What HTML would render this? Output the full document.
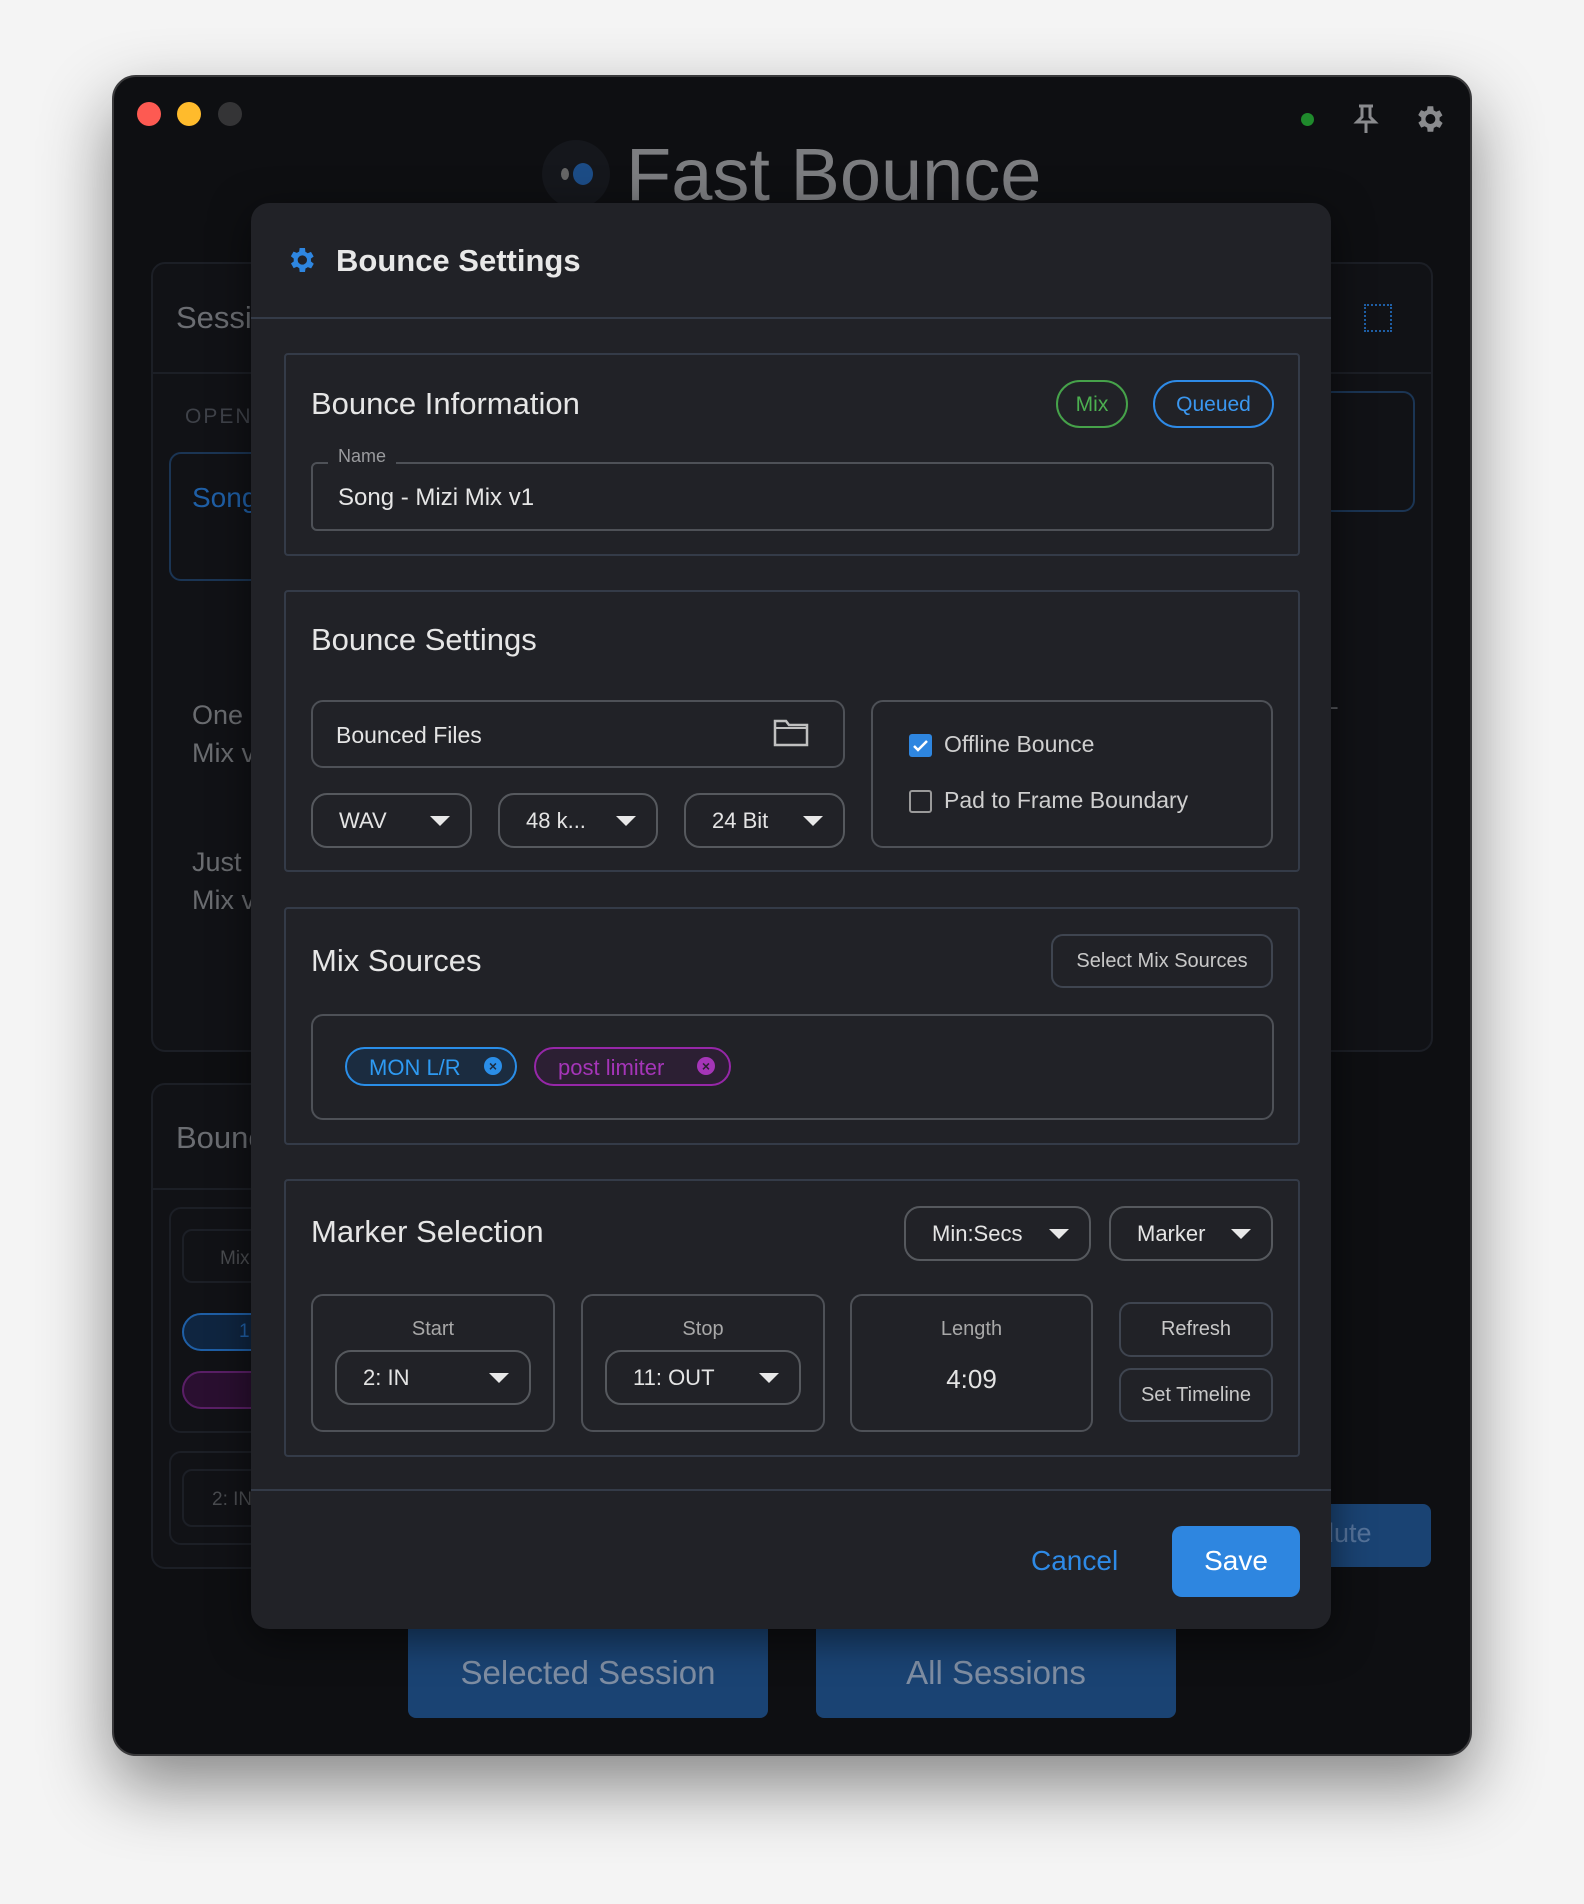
<!DOCTYPE html>
<html><head><meta charset="utf-8"><style>
*{box-sizing:border-box;margin:0;padding:0}
body{width:1584px;height:1904px;background:#f4f4f4;font-family:"Liberation Sans",sans-serif;position:relative;overflow:hidden}
.a{position:absolute}
.win{left:112px;top:75px;width:1360px;height:1681px;background:#0e0f12;border-radius:24px;border:2px solid #3a3a3c;box-shadow:0 30px 70px rgba(0,0,0,.45);overflow:hidden}
.dot{width:24px;height:24px;border-radius:50%;top:102px}
.bgcard{border:2px solid #1c1f26;border-radius:14px;background:#111216}
.t{color:#6b6d72;font-size:31px}
.dlg{left:251px;top:203px;width:1080px;height:1426px;background:#212227;border-radius:18px;box-shadow:0 10px 40px rgba(0,0,0,.5)}
.card{border:2px solid #343b48;border-radius:4px;left:284px;width:1016px}
.h{color:#e6e6e6;font-size:31px;left:311px}
.fld{border:2px solid #4e5157;border-radius:12px}
.dd{border:2px solid #56595e;border-radius:16px;color:#e4e4e4;font-size:22px;display:flex;align-items:center;justify-content:space-between;padding:0 20px 0 26px}
.tri{width:0;height:0;border-left:10px solid transparent;border-right:10px solid transparent;border-top:10px solid #e8e8e8}
.btn{border:2px solid #3f4550;border-radius:12px;color:#c8c8c8;font-size:20px;display:flex;align-items:center;justify-content:center}
.lab{color:#a8a8a8;font-size:20px;text-align:center;width:100%;top:22px;left:0}
</style></head><body>
<div class="a win"></div>
<div class="a dot" style="left:137px;background:#fd5a52"></div>
<div class="a dot" style="left:177px;background:#ffbb2c"></div>
<div class="a dot" style="left:218px;background:#343436"></div>
<div class="a" style="left:1301px;top:113px;width:13px;height:13px;border-radius:50%;background:#1f8a2c"></div>
<svg class="a" style="left:1352px;top:103px" width="28" height="32" viewBox="0 0 28 32"><path d="M7 3h14M10 3v11l-5 5h18l-5-5V3M14 19v11" stroke="#8a8b8e" stroke-width="3" fill="none"/></svg>
<svg class="a" style="left:1412px;top:102px" width="34" height="34" viewBox="0 0 24 24"><path fill="#8a8b8e" d="M19.4 13a7.5 7.5 0 0 0 0-2l2.1-1.6-2-3.5-2.5 1a7 7 0 0 0-1.7-1L15 3h-4l-.4 2.7a7 7 0 0 0-1.7 1l-2.5-1-2 3.5L6.6 11a7.5 7.5 0 0 0 0 2l-2.1 1.6 2 3.5 2.5-1a7 7 0 0 0 1.7 1L11 21h4l.4-2.7a7 7 0 0 0 1.7-1l2.5 1 2-3.5zM13 15.5a3.5 3.5 0 1 1 0-7 3.5 3.5 0 0 1 0 7z"/></svg>
<div class="a" style="left:542px;top:140px;width:68px;height:68px;border-radius:50%;background:#15171c"></div>
<div class="a" style="left:573px;top:163px;width:20px;height:22px;border-radius:50%;background:#1c4c86"></div>
<div class="a" style="left:561px;top:168px;width:8px;height:12px;border-radius:50%;background:#666"></div>
<div class="a" style="left:626px;top:132px;font-size:74px;color:#7c7d80">Fast Bounce</div>
<!-- background cards -->
<div class="a bgcard" style="left:151px;top:262px;width:1282px;height:790px"></div>
<div class="a" style="left:151px;top:372px;width:1282px;height:2px;background:#1c1f26"></div>
<div class="a t" style="left:176px;top:300px">Sessi</div>
<div class="a" style="left:185px;top:405px;color:#3f4249;font-size:21px;letter-spacing:2px">OPEN</div>
<div class="a" style="left:169px;top:452px;width:120px;height:129px;border:2px solid #1b3554;border-radius:12px"></div>
<div class="a" style="left:192px;top:482px;color:#1f5fa6;font-size:28px">Song</div>
<div class="a t" style="left:192px;top:696px;font-size:27px;line-height:38px;color:#6a6c70">One<br>Mix v</div>
<div class="a t" style="left:192px;top:843px;font-size:27px;line-height:38px;color:#6a6c70">Just<br>Mix v</div>
<div class="a" style="left:1320px;top:391px;width:95px;height:121px;border:2px solid #1b3554;border-radius:12px"></div>
<div class="a" style="left:1325px;top:688px;color:#55575c;font-size:24px">L</div>
<div class="a" style="left:1364px;top:304px;width:28px;height:28px;border:2px dotted #1f5fa6"></div>
<div class="a bgcard" style="left:151px;top:1083px;width:300px;height:486px"></div>
<div class="a t" style="left:176px;top:1120px">Bounc</div>
<div class="a" style="left:151px;top:1188px;width:300px;height:2px;background:#1c1f26"></div>
<div class="a" style="left:169px;top:1207px;width:120px;height:226px;border:2px solid #1c1f26;border-radius:12px"></div>
<div class="a" style="left:182px;top:1229px;width:100px;height:54px;border:2px solid #1c1f26;border-radius:10px;color:#4a4c50;font-size:19px;padding:17px 0 0 36px">Mix</div>
<div class="a" style="left:182px;top:1313px;width:100px;height:38px;border:2px solid #1f5fa6;border-radius:19px;background:#0f2540;color:#1f5fa6;font-size:19px;padding:6px 0 0 55px">1</div>
<div class="a" style="left:182px;top:1371px;width:100px;height:38px;border:2px solid #5a1f66;border-radius:19px;background:#2a0f30"></div>
<div class="a" style="left:169px;top:1451px;width:120px;height:94px;border:2px solid #1c1f26;border-radius:12px"></div>
<div class="a" style="left:182px;top:1469px;width:100px;height:58px;border:2px solid #1c1f26;border-radius:10px;color:#4a4c50;font-size:19px;padding:18px 0 0 28px">2: IN</div>
<div class="a" style="left:1310px;top:1504px;width:121px;height:63px;background:#1a4373;border-radius:8px;color:#55739a;font-size:27px;padding:14px 0 0 18px">lute</div>
<div class="a" style="left:408px;top:1610px;width:360px;height:108px;background:#1a4373;border-radius:8px;color:#7f8ea3;font-size:33px;text-align:center;padding-top:44px">Selected Session</div>
<div class="a" style="left:816px;top:1610px;width:360px;height:108px;background:#1a4373;border-radius:8px;color:#7f8ea3;font-size:33px;text-align:center;padding-top:44px">All Sessions</div>
<!-- dialog -->
<div class="a dlg"></div>
<svg class="a" style="left:285px;top:244px" width="32" height="32" viewBox="0 0 24 24"><path fill="#2e86e0" d="M19.4 13a7.5 7.5 0 0 0 0-2l2.1-1.6-2-3.5-2.5 1a7 7 0 0 0-1.7-1L15 3h-4l-.4 2.7a7 7 0 0 0-1.7 1l-2.5-1-2 3.5L6.6 11a7.5 7.5 0 0 0 0 2l-2.1 1.6 2 3.5 2.5-1a7 7 0 0 0 1.7 1L11 21h4l.4-2.7a7 7 0 0 0 1.7-1l2.5 1 2-3.5zM13 15.5a3.5 3.5 0 1 1 0-7 3.5 3.5 0 0 1 0 7z"/></svg>
<div class="a" style="left:336px;top:243px;color:#e8e8e8;font-size:31px;font-weight:bold">Bounce Settings</div>
<div class="a" style="left:251px;top:317px;width:1080px;height:2px;background:#343b48"></div>
<!-- card1 -->
<div class="a card" style="top:353px;height:203px"></div>
<div class="a h" style="top:386px">Bounce Information</div>
<div class="a" style="left:1056px;top:380px;width:72px;height:48px;border:2px solid #46a24a;border-radius:24px;color:#4caf50;font-size:21px;text-align:center;padding-top:11px">Mix</div>
<div class="a" style="left:1153px;top:380px;width:121px;height:48px;border:2px solid #2e8ae6;border-radius:24px;color:#3a97f0;font-size:21px;text-align:center;padding-top:11px">Queued</div>
<div class="a fld" style="left:311px;top:462px;width:963px;height:69px;border-radius:6px"></div>
<div class="a" style="left:328px;top:446px;background:#212227;padding:0 10px;color:#9a9b9e;font-size:18px">Name</div>
<div class="a" style="left:338px;top:484px;color:#e6e6e6;font-size:24px">Song - Mizi Mix v1</div>
<!-- card2 -->
<div class="a card" style="top:590px;height:282px"></div>
<div class="a h" style="top:622px">Bounce Settings</div>
<div class="a fld" style="left:311px;top:700px;width:534px;height:68px"></div>
<div class="a" style="left:336px;top:722px;color:#e4e4e4;font-size:23px">Bounced Files</div>
<svg class="a" style="left:773px;top:718px" width="36" height="30" viewBox="0 0 36 30"><path d="M2 3h11l3 4h18v20H2z" stroke="#c0c0c0" stroke-width="2.5" fill="none"/><path d="M2 10h32" stroke="#c0c0c0" stroke-width="2"/></svg>
<div class="a dd" style="left:311px;top:793px;width:161px;height:55px"><span>WAV</span><i class="tri"></i></div>
<div class="a dd" style="left:498px;top:793px;width:160px;height:55px"><span>48 k...</span><i class="tri"></i></div>
<div class="a dd" style="left:684px;top:793px;width:161px;height:55px"><span>24 Bit</span><i class="tri"></i></div>
<div class="a fld" style="left:871px;top:700px;width:402px;height:148px"></div>
<div class="a" style="left:909px;top:734px;width:23px;height:23px;background:#2e86e0;border-radius:3px"></div>
<svg class="a" style="left:911px;top:736px" width="19" height="19" viewBox="0 0 19 19"><path d="M3 10l4 4 9-9" stroke="#fff" stroke-width="2.5" fill="none"/></svg>
<div class="a" style="left:944px;top:731px;color:#cfcfcf;font-size:23px">Offline Bounce</div>
<div class="a" style="left:909px;top:790px;width:23px;height:23px;border:2px solid #9a9a9a;border-radius:3px"></div>
<div class="a" style="left:944px;top:787px;color:#cfcfcf;font-size:23px">Pad to Frame Boundary</div>
<!-- card3 -->
<div class="a card" style="top:907px;height:238px"></div>
<div class="a h" style="top:943px">Mix Sources</div>
<div class="a btn" style="left:1051px;top:934px;width:222px;height:54px">Select Mix Sources</div>
<div class="a fld" style="left:311px;top:1014px;width:963px;height:106px"></div>
<div class="a" style="left:345px;top:1047px;width:172px;height:39px;border:2px solid #2a8ee8;border-radius:20px;background:#1b2c40;color:#2e9af2;font-size:22px;padding:6px 0 0 22px">MON L/R</div>
<div class="a" style="left:484px;top:1057px;width:18px;height:18px;border-radius:50%;background:#2a8ee8;color:#1b2c40;font-size:14px;text-align:center;line-height:18px;font-weight:bold">×</div>
<div class="a" style="left:534px;top:1047px;width:197px;height:39px;border:2px solid #9627a8;border-radius:20px;background:#2c1f33;color:#a535b8;font-size:22px;padding:6px 0 0 22px">post limiter</div>
<div class="a" style="left:697px;top:1057px;width:18px;height:18px;border-radius:50%;background:#a535b8;color:#2c1f33;font-size:14px;text-align:center;line-height:18px;font-weight:bold">×</div>
<!-- card4 -->
<div class="a card" style="top:1179px;height:278px"></div>
<div class="a h" style="top:1214px">Marker Selection</div>
<div class="a dd" style="left:904px;top:1206px;width:187px;height:55px"><span>Min:Secs</span><i class="tri"></i></div>
<div class="a dd" style="left:1109px;top:1206px;width:164px;height:55px"><span>Marker</span><i class="tri"></i></div>
<div class="a fld" style="left:311px;top:1294px;width:244px;height:138px"><div class="a lab">Start</div><div class="a dd" style="left:22px;top:54px;width:196px;height:55px"><span>2: IN</span><i class="tri"></i></div></div>
<div class="a fld" style="left:581px;top:1294px;width:244px;height:138px"><div class="a lab">Stop</div><div class="a dd" style="left:22px;top:54px;width:196px;height:55px"><span>11: OUT</span><i class="tri"></i></div></div>
<div class="a fld" style="left:850px;top:1294px;width:243px;height:138px"><div class="a lab">Length</div><div class="a" style="left:0;top:68px;width:100%;text-align:center;color:#e4e4e4;font-size:26px">4:09</div></div>
<div class="a btn" style="left:1119px;top:1302px;width:154px;height:55px">Refresh</div>
<div class="a btn" style="left:1119px;top:1368px;width:154px;height:54px">Set Timeline</div>
<!-- footer -->
<div class="a" style="left:251px;top:1489px;width:1080px;height:2px;background:#343b48"></div>
<div class="a" style="left:1031px;top:1545px;color:#2e8ae6;font-size:28px">Cancel</div>
<div class="a" style="left:1172px;top:1526px;width:128px;height:71px;background:#2e86e0;border-radius:10px;color:#fff;font-size:28px;text-align:center;padding-top:19px">Save</div>
</body></html>
